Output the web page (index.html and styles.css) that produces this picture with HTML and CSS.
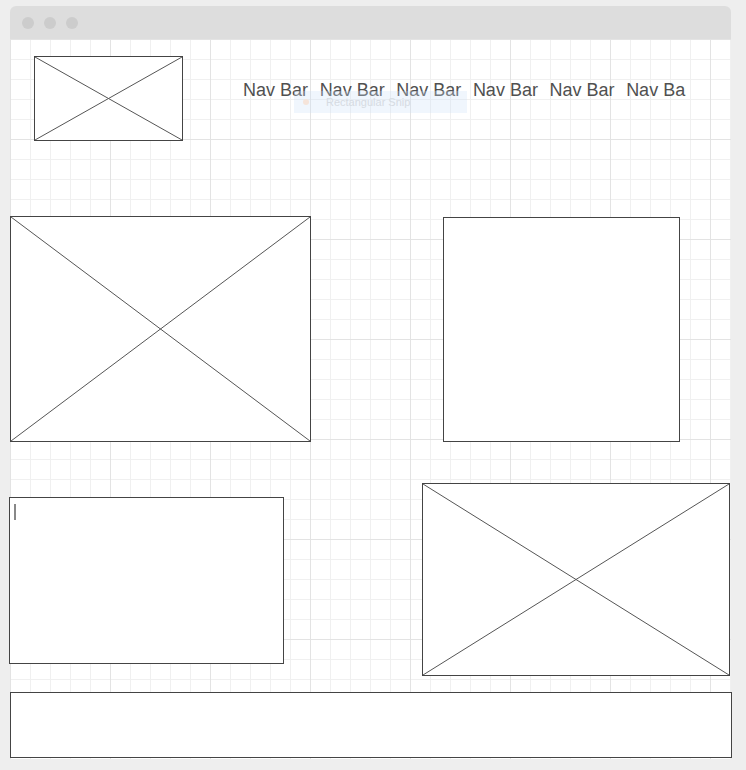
FILE: index.html
```html
<!DOCTYPE html>
<html lang="en">
  <head>
    <meta charset="UTF-8" />
    <meta name="viewport" content="width=device-width, initial-scale=1.0" />
    <title>Wireframe</title>
    <link rel="stylesheet" href="styles.css">
  </head>

  <body>
    <div class="vindu">
      <div class="tittellinje">
        <span class="prikk"></span>
        <span class="prikk"></span>
        <span class="prikk"></span>
      </div>

      <div class="lerret">
        <!-- Toppen: logo og navigasjon -->
        <div class="topp">
          <div class="boks bilde logo">
            <svg viewBox="0 0 100 100" preserveAspectRatio="none">
              <line x1="0" y1="0" x2="100" y2="100" />
              <line x1="100" y1="0" x2="0" y2="100" />
            </svg>
          </div>
          <nav class="meny">
            <span>Nav Bar</span>
            <span>Nav Bar</span>
            <span>Nav Bar</span>
            <span>Nav Bar</span>
            <span>Nav Bar</span>
            <span>Nav Bar</span>
          </nav>
        </div>

        <div class="rad rad-en">
          <div class="boks bilde hoved">
            <svg viewBox="0 0 100 100" preserveAspectRatio="none">
              <line x1="0" y1="0" x2="100" y2="100" />
              <line x1="100" y1="0" x2="0" y2="100" />
            </svg>
          </div>
          <div class="boks tom"></div>
        </div>

        <div class="rad rad-to">
          <div class="boks tekstfelt"><span class="markor"></span></div>
          <div class="boks bilde side">
            <svg viewBox="0 0 100 100" preserveAspectRatio="none">
              <line x1="0" y1="0" x2="100" y2="100" />
              <line x1="100" y1="0" x2="0" y2="100" />
            </svg>
          </div>
        </div>

        <div class="boks bunn"></div>

        <!-- Verktøytips som ligger over navigasjonen -->
        <div class="tips"><span class="tips-prikk"></span>Rectangular Snip</div>
      </div>
    </div>
  </body>
</html>
```

FILE: styles.css
```css
body {
  margin: 0;
  background-color: #eeeeee;
  font-family: "Liberation Sans", Arial, sans-serif;
}

.vindu {
  width: 721px;
  margin: 6px 0 0 10px;
}

.tittellinje {
  height: 33px;
  background-color: #dddddd;
  border-radius: 6px 6px 0 0;
  display: flex;
  align-items: center;
  gap: 10px;
  padding-left: 12px;
}

.prikk {
  width: 12px;
  height: 12px;
  border-radius: 50%;
  background-color: #cccccc;
}

/* Rutenett: tynne linjer hver 20px, litt mørkere hver 100px */
.lerret {
  position: relative;
  height: 720px;
  background-color: #ffffff;
  background-image:
    linear-gradient(to right, #e3e3e3 1px, transparent 1px),
    linear-gradient(to bottom, #e3e3e3 1px, transparent 1px),
    linear-gradient(to right, #f0f0f0 1px, transparent 1px),
    linear-gradient(to bottom, #f0f0f0 1px, transparent 1px);
  background-size: 100px 100px, 100px 100px, 20px 20px, 20px 20px;
}

.boks {
  box-sizing: border-box;
  border: 1px solid #444444;
  background-color: #ffffff;
  flex-shrink: 0;
}

.bilde svg {
  display: block;
  width: 100%;
  height: 100%;
}

.bilde line {
  stroke: #555555;
  stroke-width: 1;
  vector-effect: non-scaling-stroke;
}

.topp {
  display: flex;
  align-items: flex-start;
  padding-top: 17px;
}

.logo {
  width: 149px;
  height: 85px;
  margin-left: 24px;
}

.meny {
  display: flex;
  gap: 11.6px;
  width: 443px;
  margin: 24px 0 0 60px;
  overflow: hidden;
  white-space: nowrap;
  font-size: 18px;
  line-height: 20px;
  color: #505050;
}

.rad {
  display: flex;
  align-items: flex-start;
}

.rad-en {
  margin-top: 75px;
}

.hoved {
  width: 301px;
  height: 226px;
}

.tom {
  width: 237px;
  height: 225px;
  margin: 1px 0 0 132px;
}

.rad-to {
  margin-top: 41px;
}

.tekstfelt {
  width: 275px;
  height: 167px;
  margin: 14px 0 0 -1px;
  padding: 6px 0 0 4px;
}

.markor {
  display: block;
  width: 2px;
  height: 16px;
  background-color: #888888;
}

.side {
  width: 308px;
  height: 193px;
  margin-left: 138px;
}

.bunn {
  width: 722px;
  height: 66px;
  margin-top: 16px;
}

.tips {
  position: absolute;
  left: 284px;
  top: 52px;
  width: 173px;
  height: 22px;
  display: flex;
  align-items: center;
  box-sizing: border-box;
  padding-left: 32px;
  background-color: rgba(205, 225, 250, 0.3);
  font-size: 11px;
  color: #d6dbe2;
}

.tips-prikk {
  position: absolute;
  left: 9px;
  top: 8px;
  width: 6px;
  height: 6px;
  border-radius: 50%;
  background-color: #f5e4da;
}
```
